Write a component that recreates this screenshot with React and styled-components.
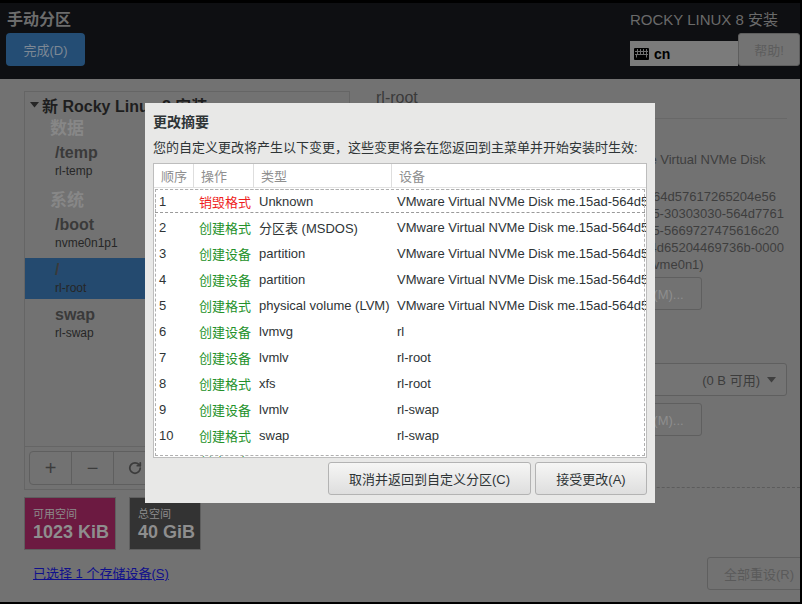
import React from "react";
import styled, { createGlobalStyle } from "styled-components";
import { RotateCw } from "lucide-react";

const GlobalStyle = createGlobalStyle`
  html, body {
    margin: 0;
    padding: 0;
    background: #000;
    overflow: hidden;
  }
  body {
    font-family: "Liberation Sans", "Noto Sans CJK SC", sans-serif;
  }
  * {
    box-sizing: border-box;
  }
`;

const changes = [
  { id: 1, action: "销毁格式", destroy: true, type: "Unknown", device: "VMware Virtual NVMe Disk me.15ad-564d57617265204e566d65" },
  { id: 2, action: "创建格式", type: "分区表 (MSDOS)", device: "VMware Virtual NVMe Disk me.15ad-564d57617265204e566d65" },
  { id: 3, action: "创建设备", type: "partition", device: "VMware Virtual NVMe Disk me.15ad-564d57617265204e566d65" },
  { id: 4, action: "创建设备", type: "partition", device: "VMware Virtual NVMe Disk me.15ad-564d57617265204e566d65" },
  { id: 5, action: "创建格式", type: "physical volume (LVM)", device: "VMware Virtual NVMe Disk me.15ad-564d57617265204e566d65" },
  { id: 6, action: "创建设备", type: "lvmvg", device: "rl" },
  { id: 7, action: "创建设备", type: "lvmlv", device: "rl-root" },
  { id: 8, action: "创建格式", type: "xfs", device: "rl-root" },
  { id: 9, action: "创建设备", type: "lvmlv", device: "rl-swap" },
  { id: 10, action: "创建格式", type: "swap", device: "rl-swap" },
  { id: 11, action: "创建设备", type: "lvmlv", device: "rl-temp" },
];

// the left part of these lines sits under the dialog
const diskLines = [
  ".15ad-564d57617265204e56",
  "e566d65-30303030-564d7761",
  "7617265-5669727475616c20",
  "0-4e564d65204469736b-0000",
  "0001 (nvme0n1)",
];

const KeyboardIcon = () => (
  <svg width="15" height="12" viewBox="0 0 15 12">
    <rect x="0" y="0" width="15" height="12" rx="1" fill="#000" />
    <path
      d="M1 3.5h13M1 6.5h13M3.5 1v5M6.5 1v5M9.5 1v5M12.5 1v5M2.5 6.5v3M12.5 6.5v3"
      stroke="#6e6e6e"
      strokeWidth="1"
    />
  </svg>
);

const Caret = ({ color }) => (
  <svg width="9" height="6" viewBox="0 0 9 6">
    <path d="M0 0h9L4.5 5.5z" fill={color} />
  </svg>
);

const App = () => {
  return (
    <Frame>
      <GlobalStyle />
      <Header>
        <HeaderLeft>
          <SpokeTitle>手动分区</SpokeTitle>
          <DoneButton>完成(D)</DoneButton>
        </HeaderLeft>
        <HeaderRight>
          <ProductTitle>ROCKY LINUX 8 安装</ProductTitle>
          <HeaderControls>
            <LayoutBox>
              <KeyboardIcon />
              <span>cn</span>
            </LayoutBox>
            <HelpButton>帮助!</HelpButton>
          </HeaderControls>
        </HeaderRight>
      </Header>

      <Main>
        <LeftColumn>
          <Panel>
            <Tree>
              <TreeRoot>
                <Caret color="#262626" />
                <span>新 Rocky Linux 8 安装</span>
              </TreeRoot>
              <GroupLabel>数据</GroupLabel>
              <MountItem>
                <MountName>/temp</MountName>
                <MountDevice>rl-temp</MountDevice>
              </MountItem>
              <GroupLabel $gap>系统</GroupLabel>
              <MountItem>
                <MountName>/boot</MountName>
                <MountDevice>nvme0n1p1</MountDevice>
              </MountItem>
              <MountItem $selected>
                <MountName>/</MountName>
                <MountDevice>rl-root</MountDevice>
              </MountItem>
              <MountItem>
                <MountName>swap</MountName>
                <MountDevice>rl-swap</MountDevice>
              </MountItem>
            </Tree>
            <PanelToolbar>
              <ToolGroup>
                <ToolButton>+</ToolButton>
                <ToolButton>−</ToolButton>
                <ToolButton>
                  <RotateCw size={14} strokeWidth={3} color="#3c3c3c" />
                </ToolButton>
                <ToolButton />
              </ToolGroup>
            </PanelToolbar>
          </Panel>
          <SpaceRow>
            <SpaceBox $tone="free">
              <SpaceLabel>可用空间</SpaceLabel>
              <SpaceValue>1023 KiB</SpaceValue>
            </SpaceBox>
            <SpaceBox $tone="total">
              <SpaceLabel>总空间</SpaceLabel>
              <SpaceValue>40 GiB</SpaceValue>
            </SpaceBox>
          </SpaceRow>
          <StorageLink>已选择 1 个存储设备(S)</StorageLink>
        </LeftColumn>

        <RightColumn>
          <DeviceTitle>rl-root</DeviceTitle>
          <Separator />
          <DetailGrid>
            <div />
            <DeviceColumn>
              <FieldLabel>设备：</FieldLabel>
              <DiskName>VMware Virtual NVMe Disk</DiskName>
              <DiskId>
                {diskLines.map((line) => (
                  <div key={line}>{line}</div>
                ))}
              </DiskId>
              <GhostButton $top={4}>修改(M)...</GhostButton>
              <FieldLabel $top={35}>卷组：</FieldLabel>
              <Dropdown>
                <span>rl</span>
                <DropdownRight>
                  <span>(0 B 可用)</span>
                  <Caret color="#3f3f3f" />
                </DropdownRight>
              </Dropdown>
              <GhostButton $top={7}>修改(M)...</GhostButton>
            </DeviceColumn>
          </DetailGrid>
          <DashedRule />
          <ResetButton>全部重设(R)</ResetButton>
        </RightColumn>

        <Dialog>
          <DialogTitle>更改摘要</DialogTitle>
          <DialogText>
            您的自定义更改将产生以下变更，这些变更将会在您返回到主菜单并开始安装时生效:
          </DialogText>
          <ChangeTable>
            <HeadRow>
              <HeadCell $divider>顺序</HeadCell>
              <HeadCell $divider>操作</HeadCell>
              <HeadCell $divider>类型</HeadCell>
              <HeadCell>设备</HeadCell>
            </HeadRow>
            <TableBody>
              {changes.map((c) => (
                <Row key={c.id} $focused={c.id === 1}>
                  <Cell>{c.id}</Cell>
                  <ActionCell $destroy={c.destroy}>{c.action}</ActionCell>
                  <Cell>{c.type}</Cell>
                  <Cell>{c.device}</Cell>
                </Row>
              ))}
            </TableBody>
          </ChangeTable>
          <DialogButtons>
            <DialogButton>取消并返回到自定义分区(C)</DialogButton>
            <DialogButton $wide={112}>接受更改(A)</DialogButton>
          </DialogButtons>
        </Dialog>
      </Main>
    </Frame>
  );
};

const Frame = styled.div`
  width: 802px;
  height: 604px;
  background: #000;
  padding: 3px 2px 2px 0;
  display: flex;
  flex-direction: column;
`;

const Header = styled.header`
  height: 76px;
  flex-shrink: 0;
  background: #0e0f12;
  display: flex;
  justify-content: space-between;
`;

const HeaderLeft = styled.div`
  padding: 7px 0 0 6px;
  display: flex;
  flex-direction: column;
  align-items: flex-start;
`;

const SpokeTitle = styled.div`
  font-size: 16px;
  font-weight: bold;
  line-height: 20px;
  color: #6c6c6c;
  margin-left: 1px;
`;

const DoneButton = styled.button`
  margin-top: 3px;
  width: 79px;
  height: 33px;
  border: none;
  border-radius: 4px;
  background: #244d74;
  color: #7d8894;
  font-family: inherit;
  font-size: 13px;
  padding: 0;
`;

const HeaderRight = styled.div`
  padding-top: 8px;
  display: flex;
  flex-direction: column;
  align-items: flex-end;
`;

const ProductTitle = styled.div`
  font-size: 15px;
  line-height: 18px;
  color: #6a6a6a;
  margin-right: 22px;
`;

const HeaderControls = styled.div`
  margin-top: 4px;
  display: flex;
  align-items: flex-end;
`;

const LayoutBox = styled.div`
  width: 108px;
  height: 25px;
  background: #7b7b7b;
  display: flex;
  align-items: center;
  gap: 5px;
  padding-left: 4px;
  font-size: 14px;
  font-weight: bold;
  color: #000;
`;

const HelpButton = styled.button`
  width: 62px;
  height: 33px;
  background: #737373;
  border: 1px solid #5e5e5e;
  border-radius: 3px;
  color: #5d5d5d;
  font-family: inherit;
  font-size: 13px;
  padding: 0;
`;

const Main = styled.main`
  flex: 1;
  position: relative;
  overflow: hidden;
  background: #727272;
  display: flex;
`;

const LeftColumn = styled.div`
  width: 350px;
  flex-shrink: 0;
  padding: 12px 0 0 24px;
  display: flex;
  flex-direction: column;
`;

const Panel = styled.div`
  width: 326px;
  height: 399px;
  border: 1px solid #656565;
  display: flex;
  flex-direction: column;
`;

const Tree = styled.div`
  flex: 1;
  padding-top: 1px;
`;

const TreeRoot = styled.div`
  height: 24px;
  display: flex;
  align-items: center;
  gap: 3px;
  padding-left: 5px;
  font-size: 16px;
  font-weight: bold;
  color: #1e1e1e;
`;

const GroupLabel = styled.div`
  height: 24px;
  line-height: 24px;
  margin-top: ${(p) => (p.$gap ? "7px" : "0")};
  padding-left: 25px;
  font-size: 17px;
  font-weight: bold;
  color: #878787;
`;

const MountItem = styled.div`
  height: 41px;
  margin-bottom: 4px;
  padding: 2px 0 0 30px;
  background: ${(p) => (p.$selected ? "#244a6f" : "transparent")};
`;

const MountName = styled.div`
  font-size: 16px;
  font-weight: bold;
  line-height: 20px;
  color: #3a3a3a;
`;

const MountDevice = styled.div`
  font-size: 12px;
  line-height: 16px;
  color: #262626;
`;

const PanelToolbar = styled.div`
  height: 43px;
  border-top: 1px solid #656565;
  padding: 4px;
`;

const ToolGroup = styled.div`
  display: flex;
  height: 34px;
  border: 1px solid #5f5f5f;
  border-radius: 4px;
  width: max-content;
`;

const ToolButton = styled.div`
  width: 42px;
  display: flex;
  align-items: center;
  justify-content: center;
  font-size: 20px;
  color: #3c3c3c;
  border-right: 1px solid #5f5f5f;

  &:last-child {
    border-right: none;
  }
`;

const SpaceRow = styled.div`
  margin-top: 7px;
  display: flex;
  gap: 13px;
`;

const SpaceBox = styled.div`
  height: 53px;
  padding: 9px 0 0 8px;
  border: 1px solid #5e5e5e;
  width: ${(p) => (p.$tone === "free" ? "92px" : "72px")};
  background: ${(p) => (p.$tone === "free" ? "#6c1a41" : "#333333")};
`;

const SpaceLabel = styled.div`
  font-size: 11px;
  line-height: 14px;
  color: #8c8c8c;
`;

const SpaceValue = styled.div`
  font-size: 18px;
  font-weight: bold;
  line-height: 22px;
  color: #8e8e8e;
`;

const StorageLink = styled.a`
  margin: 16px 0 0 9px;
  font-size: 13px;
  line-height: 16px;
  color: #10108c;
  text-decoration: underline;
`;

const RightColumn = styled.div`
  flex: 1;
  padding: 9px 13px 0 26px;
  display: flex;
  flex-direction: column;
`;

const DeviceTitle = styled.div`
  font-size: 16px;
  line-height: 20px;
  color: #3a3a3a;
`;

const Separator = styled.div`
  margin-top: 10px;
  border-top: 1px solid #686868;
`;

const DetailGrid = styled.div`
  margin-top: 15px;
  display: grid;
  grid-template-columns: 1fr 178px;
`;

const DeviceColumn = styled.div`
  display: flex;
  flex-direction: column;
  align-items: flex-start;
  font-size: 13px;
  color: #3e3e3e;
`;

const FieldLabel = styled.div`
  margin-top: ${(p) => p.$top || 0}px;
  line-height: 17px;
`;

const DiskName = styled.div`
  line-height: 17px;
`;

const DiskId = styled.div`
  margin-top: 20px;
  line-height: 17px;
  white-space: nowrap;
`;

const GhostButton = styled.div`
  margin-top: ${(p) => p.$top}px;
  width: 93px;
  height: 33px;
  border: 1px solid #5f5f5f;
  border-radius: 3px;
  display: flex;
  align-items: center;
  justify-content: center;
  color: #8e8e8e;
`;

const Dropdown = styled.div`
  margin-top: 1px;
  width: 178px;
  height: 33px;
  border: 1px solid #5f5f5f;
  border-radius: 3px;
  background: #747474;
  display: flex;
  align-items: center;
  justify-content: space-between;
  padding: 0 10px 0 8px;
  color: #3c3c3c;
`;

const DropdownRight = styled.div`
  display: flex;
  align-items: center;
  gap: 7px;
`;

const DashedRule = styled.div`
  margin: 51px -13px 0 0;
  border-top: 1px dashed #5c5c5c;
`;

const ResetButton = styled.div`
  margin: 69px -20px 0 0;
  align-self: flex-end;
  width: 100px;
  height: 33px;
  border: 1px solid #5f5f5f;
  border-radius: 3px;
  display: flex;
  align-items: center;
  padding-left: 16px;
  font-size: 13px;
  color: #5a5a5a;
`;

const Dialog = styled.div`
  position: absolute;
  left: 145px;
  top: 24px;
  width: 510px;
  height: 400px;
  background: #e8e8e7;
  padding: 10px 8px 8px;
  display: flex;
  flex-direction: column;
  color: #2e3436;
`;

const DialogTitle = styled.div`
  font-size: 14px;
  font-weight: bold;
  line-height: 18px;
`;

const DialogText = styled.div`
  margin-top: 8px;
  font-size: 13px;
  line-height: 18px;
  white-space: nowrap;
`;

const ChangeTable = styled.div`
  margin-top: 6px;
  height: 295px;
  border: 1px solid #bdbdbd;
  background: #fff;
  display: flex;
  flex-direction: column;
`;

const columns = "40px 60px 138px 1fr";

const HeadRow = styled.div`
  height: 24px;
  flex-shrink: 0;
  display: grid;
  grid-template-columns: ${columns};
  border-bottom: 1px solid #e2e2e2;
`;

const HeadCell = styled.div`
  display: flex;
  align-items: center;
  padding-left: 7px;
  font-size: 13px;
  color: #8f8f8f;
  border-right: ${(p) => (p.$divider ? "1px solid #dedede" : "none")};
`;

const TableBody = styled.div`
  flex: 1;
  overflow: hidden;
  outline: 1px dashed #b0b0b0;
  outline-offset: -2px;
`;

const Row = styled.div`
  height: 26px;
  display: grid;
  grid-template-columns: ${columns};
  align-items: center;
  font-size: 13px;
  outline: ${(p) => (p.$focused ? "1px dashed #9a9a9a" : "none")};
  outline-offset: -2px;
`;

const Cell = styled.div`
  padding-left: 5px;
  white-space: nowrap;
  overflow: hidden;
`;

const ActionCell = styled(Cell)`
  color: ${(p) => (p.$destroy ? "#ee1c1c" : "#24912a")};
`;

const DialogButtons = styled.div`
  margin-top: 4px;
  display: flex;
  justify-content: flex-end;
  gap: 4px;
`;

const DialogButton = styled.button`
  width: ${(p) => p.$wide || 203}px;
  height: 33px;
  border: 1px solid #b3b3b3;
  border-radius: 3px;
  background: linear-gradient(#f6f6f5, #dedede);
  color: #2e3436;
  font-family: inherit;
  font-size: 13px;
  padding: 0;
`;

export default App;
